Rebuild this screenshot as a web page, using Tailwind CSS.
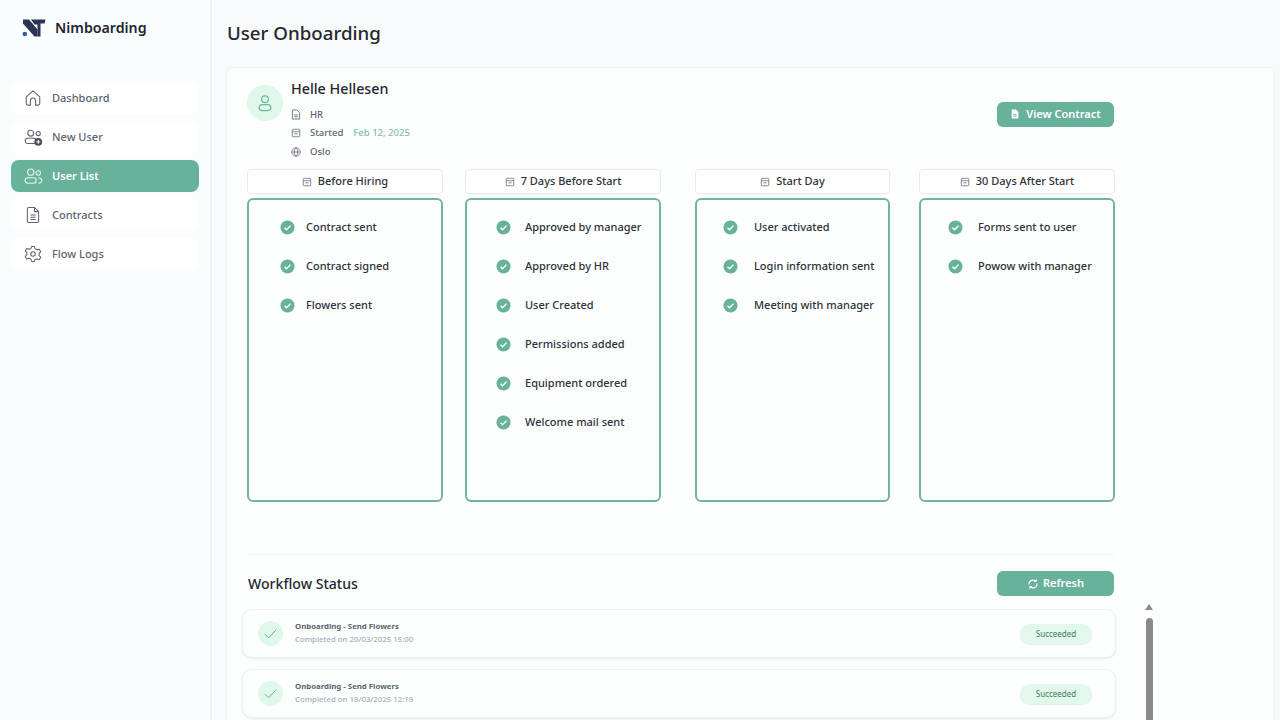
<!doctype html>
<html><head><meta charset="utf-8"><script src="https://cdn.jsdelivr.net/npm/@tailwindcss/browser@4"></script></head>
<body class="m-0 overflow-hidden">
<div class="flex h-[720px] w-[1280px] overflow-hidden bg-[#f8fafb] font-['Noto_Sans',sans-serif]">
  <aside class="w-[212px] shrink-0 border-r-2 border-[#f0f3f5] bg-[#fafdfd]">
    <div class="flex h-[54px] items-center pl-[22px] pt-px">
      <svg class="h-[18px] w-[24px]" viewBox="0 0 24 18"><path d="M1 0.500H7L15.500 10.500V17.500H12.500L1 4.500Z" fill="#2b3553"/><path d="M9 0.500H23.500L22.500 4.500H18.500V17.500H15.500V5.500H12.500Z" fill="#2b3553"/><circle cx="2.800" cy="15" r="2.300" fill="#3c55a8"/></svg>
      <span class="ml-[9px] mt-[2px] text-[14.200px] font-semibold leading-none text-[#1f2430]">Nimboarding</span>
    </div>
    <nav class="ml-[11px] mt-[28px] flex w-[188px] flex-col gap-[7px] text-[11px] font-medium text-[#5d6470]">
      <a class="flex h-[32px] items-center rounded-lg bg-white pl-[13px]">
        <svg class="h-[18px] w-[18px]" viewBox="0 0 24 24" fill="none" stroke="#5d6470" stroke-width="1.400" stroke-linejoin="round"><path d="M3 10.500 12 2.500l9 8V19a2.500 2.500 0 0 1-2.500 2.500H15.500v-6a3.500 3.500 0 0 0-7 0v6H5.500A2.500 2.500 0 0 1 3 19z"/></svg>
        <span class="ml-[10px]">Dashboard</span></a>
      <a class="flex h-[32px] items-center rounded-lg bg-white pl-[13px]">
        <svg class="h-[19px] w-[19px]" viewBox="0 0 24 24" fill="none" stroke="#5d6470" stroke-width="1.400"><circle cx="8.500" cy="6.500" r="3.700"/><rect x="1.500" y="13" width="14" height="6.500" rx="3.200"/><circle cx="18" cy="7" r="2.600"/><circle cx="18" cy="17.500" r="5" fill="#4a505c" stroke="none"/><path d="M18 15v5M15.500 17.500h5" stroke="#fff" stroke-width="1.200"/></svg>
        <span class="ml-[9px]">New User</span></a>
      <a class="flex h-[32px] items-center rounded-lg bg-[#68b29c] pl-[13px] font-semibold text-white">
        <svg class="h-[19px] w-[19px]" viewBox="0 0 24 24" fill="none" stroke="#dff8e9" stroke-width="1.400"><circle cx="8.500" cy="6.500" r="3.900"/><rect x="1.500" y="13.500" width="14" height="7" rx="3.400"/><circle cx="18" cy="7.500" r="2.800"/><path d="M18 13.500c3 0 4.500 1.500 4.500 3.300S21 20.500 18 20.500"/></svg>
        <span class="ml-[9px]">User List</span></a>
      <a class="flex h-[32px] items-center rounded-lg bg-white pl-[13px]">
        <svg class="h-[18px] w-[18px]" viewBox="0 0 24 24" fill="none" stroke="#5d6470" stroke-width="1.400" stroke-linejoin="round"><path d="M4.500 4a2 2 0 0 1 2-2h7.500l5.500 5.500V20a2 2 0 0 1-2 2h-11a2 2 0 0 1-2-2z"/><path d="M14 2v5.500h5.500M8.500 12h7M8.500 15h7M8.500 18h7"/></svg>
        <span class="ml-[10px]">Contracts</span></a>
      <a class="flex h-[32px] items-center rounded-lg bg-white pl-[13px]">
        <svg class="h-[18px] w-[18px]" viewBox="0 0 24 24" fill="none" stroke="#5d6470" stroke-width="1.400" stroke-linejoin="round"><circle cx="12" cy="12" r="3"/><path d="M10 2h4l.7 3 2.600 1.500 3-.9 2 3.400-2.200 2.100v3l2.200 2.100-2 3.400-3-.9L14.700 19l-.7 3h-4l-.7-3-2.600-1.300-3 .9-2-3.400 2.200-2.100v-3L1.700 8l2-3.400 3 .9L9.300 5z"/></svg>
        <span class="ml-[10px]">Flow Logs</span></a>
    </nav>
  </aside>
  <main class="min-w-0 flex-1 pl-[14px] pr-[5px]">
    <h1 class="flex h-[67px] items-center pl-px text-[18.700px] font-medium text-[#24272e]">User Onboarding</h1>
    <section class="h-[700px] rounded-md border border-[#eff3f3] bg-[#fbfefd] pl-[20px] pt-[9px]">
      <div class="w-[867px]">
        <div class="flex h-[92px] items-center justify-between">
          <div class="flex h-full items-start">
            <div class="mt-[8px] flex h-[36px] w-[36px] items-center justify-center rounded-full bg-[#dff8e9]">
              <svg class="h-[20px] w-[20px]" viewBox="0 0 24 24" fill="none" stroke="#74b79f" stroke-width="1.500"><circle cx="12" cy="7.500" r="4"/><rect x="5" y="14" width="14" height="7" rx="3.500"/></svg>
            </div>
            <div class="ml-[8px]">
              <div class="text-[14.300px] font-medium leading-[24px] text-[#24272e]">Helle Hellesen</div>
              <ul class="mt-[4.500px] flex flex-col text-[9.500px] font-medium leading-[18.500px] text-[#5d6470]">
                <li class="flex items-center"><svg class="mr-[9px] h-[11px] w-[10px]" viewBox="0 0 22 24" fill="none" stroke="#6b7280" stroke-width="2"><path d="M3 2h10l6 6v14H3z"/><path d="M7 13h8M7 17h8"/></svg>HR</li>
                <li class="flex items-center"><svg class="mr-[9px] h-[10px] w-[10px]" viewBox="0 0 24 24" fill="none" stroke="#6b7280" stroke-width="2"><rect x="3" y="3" width="18" height="18" rx="2"/><path d="M3 9h18M8 14h8"/></svg>Started<span class="ml-[10px] text-[#7fbfaa]">Feb 12, 2025</span></li>
                <li class="flex items-center"><svg class="mr-[9px] h-[10px] w-[10px]" viewBox="0 0 24 24" fill="none" stroke="#6b7280" stroke-width="2"><circle cx="12" cy="12" r="10"/><path d="M2 12h20M12 2c-6 6-6 14 0 20M12 2c6 6 6 14 0 20"/></svg>Oslo</li>
              </ul>
            </div>
          </div>
          <button class="mb-[18px] flex h-[25px] w-[117px] items-center justify-center rounded-md bg-[#68b29c] text-[11px] font-semibold text-white">
            <svg class="mr-[6px] h-[10px] w-[10px]" viewBox="0 0 24 24" fill="#fff"><path d="M4 1h10l6 6v16H4z"/><path d="M8 13h8M8 17h8" stroke="#68b29c" stroke-width="2"/></svg>View Contract</button>
        </div>
        <div class="flex items-start">
          <div class="w-[196px] shrink-0">
            <div class="flex h-[25px] items-center justify-center rounded-sm border border-[#e8ebec] bg-white text-[11px] font-medium text-[#2e323a]"><svg class="mr-[6px] h-[10px] w-[10px]" viewBox="0 0 24 24" fill="none" stroke="#6b7280" stroke-width="2"><rect x="3" y="3" width="18" height="18" rx="2"/><path d="M3 9h18M8 14h8"/></svg>Before Hiring</div>
            <div class="mt-[4px] flex h-[304px] flex-col gap-[19px] rounded-md border-2 border-[#74b39e] pl-[31px] pt-[17px] text-[11px] font-medium text-[#2e323a]">
              <div class="flex h-[20px] items-center"><svg class="mr-[11px] h-[15px] w-[15px] shrink-0" viewBox="0 0 16 16"><circle cx="8" cy="8" r="7.500" fill="#68b29c"/><path d="M4.800 8.200l2.200 2.200 4.200-4.400" fill="none" stroke="#fff" stroke-width="1.500"/></svg>Contract sent</div>
              <div class="flex h-[20px] items-center"><svg class="mr-[11px] h-[15px] w-[15px] shrink-0" viewBox="0 0 16 16"><circle cx="8" cy="8" r="7.500" fill="#68b29c"/><path d="M4.800 8.200l2.200 2.200 4.200-4.400" fill="none" stroke="#fff" stroke-width="1.500"/></svg>Contract signed</div>
              <div class="flex h-[20px] items-center"><svg class="mr-[11px] h-[15px] w-[15px] shrink-0" viewBox="0 0 16 16"><circle cx="8" cy="8" r="7.500" fill="#68b29c"/><path d="M4.800 8.200l2.200 2.200 4.200-4.400" fill="none" stroke="#fff" stroke-width="1.500"/></svg>Flowers sent</div>
            </div>
          </div>
          <div class="ml-[22px] w-[196px] shrink-0">
            <div class="flex h-[25px] items-center justify-center rounded-sm border border-[#e8ebec] bg-white text-[11px] font-medium text-[#2e323a]"><svg class="mr-[6px] h-[10px] w-[10px]" viewBox="0 0 24 24" fill="none" stroke="#6b7280" stroke-width="2"><rect x="3" y="3" width="18" height="18" rx="2"/><path d="M3 9h18M8 14h8"/></svg>7 Days Before Start</div>
            <div class="mt-[4px] flex h-[304px] flex-col gap-[19px] rounded-md border-2 border-[#74b39e] pl-[29px] pt-[17px] text-[11px] font-medium text-[#2e323a]">
              <div class="flex h-[20px] items-center"><svg class="mr-[14px] h-[15px] w-[15px] shrink-0" viewBox="0 0 16 16"><circle cx="8" cy="8" r="7.500" fill="#68b29c"/><path d="M4.800 8.200l2.200 2.200 4.200-4.400" fill="none" stroke="#fff" stroke-width="1.500"/></svg>Approved by manager</div>
              <div class="flex h-[20px] items-center"><svg class="mr-[14px] h-[15px] w-[15px] shrink-0" viewBox="0 0 16 16"><circle cx="8" cy="8" r="7.500" fill="#68b29c"/><path d="M4.800 8.200l2.200 2.200 4.200-4.400" fill="none" stroke="#fff" stroke-width="1.500"/></svg>Approved by HR</div>
              <div class="flex h-[20px] items-center"><svg class="mr-[14px] h-[15px] w-[15px] shrink-0" viewBox="0 0 16 16"><circle cx="8" cy="8" r="7.500" fill="#68b29c"/><path d="M4.800 8.200l2.200 2.200 4.200-4.400" fill="none" stroke="#fff" stroke-width="1.500"/></svg>User Created</div>
              <div class="flex h-[20px] items-center"><svg class="mr-[14px] h-[15px] w-[15px] shrink-0" viewBox="0 0 16 16"><circle cx="8" cy="8" r="7.500" fill="#68b29c"/><path d="M4.800 8.200l2.200 2.200 4.200-4.400" fill="none" stroke="#fff" stroke-width="1.500"/></svg>Permissions added</div>
              <div class="flex h-[20px] items-center"><svg class="mr-[14px] h-[15px] w-[15px] shrink-0" viewBox="0 0 16 16"><circle cx="8" cy="8" r="7.500" fill="#68b29c"/><path d="M4.800 8.200l2.200 2.200 4.200-4.400" fill="none" stroke="#fff" stroke-width="1.500"/></svg>Equipment ordered</div>
              <div class="flex h-[20px] items-center"><svg class="mr-[14px] h-[15px] w-[15px] shrink-0" viewBox="0 0 16 16"><circle cx="8" cy="8" r="7.500" fill="#68b29c"/><path d="M4.800 8.200l2.200 2.200 4.200-4.400" fill="none" stroke="#fff" stroke-width="1.500"/></svg>Welcome mail sent</div>
            </div>
          </div>
          <div class="ml-[34px] w-[195px] shrink-0">
            <div class="flex h-[25px] items-center justify-center rounded-sm border border-[#e8ebec] bg-white text-[11px] font-medium text-[#2e323a]"><svg class="mr-[6px] h-[10px] w-[10px]" viewBox="0 0 24 24" fill="none" stroke="#6b7280" stroke-width="2"><rect x="3" y="3" width="18" height="18" rx="2"/><path d="M3 9h18M8 14h8"/></svg>Start Day</div>
            <div class="mt-[4px] flex h-[304px] flex-col gap-[19px] rounded-md border-2 border-[#74b39e] pl-[26px] pt-[17px] text-[11px] font-medium text-[#2e323a]">
              <div class="flex h-[20px] items-center"><svg class="mr-[16px] h-[15px] w-[15px] shrink-0" viewBox="0 0 16 16"><circle cx="8" cy="8" r="7.500" fill="#68b29c"/><path d="M4.800 8.200l2.200 2.200 4.200-4.400" fill="none" stroke="#fff" stroke-width="1.500"/></svg>User activated</div>
              <div class="flex h-[20px] items-center"><svg class="mr-[16px] h-[15px] w-[15px] shrink-0" viewBox="0 0 16 16"><circle cx="8" cy="8" r="7.500" fill="#68b29c"/><path d="M4.800 8.200l2.200 2.200 4.200-4.400" fill="none" stroke="#fff" stroke-width="1.500"/></svg>Login information sent</div>
              <div class="flex h-[20px] items-center"><svg class="mr-[16px] h-[15px] w-[15px] shrink-0" viewBox="0 0 16 16"><circle cx="8" cy="8" r="7.500" fill="#68b29c"/><path d="M4.800 8.200l2.200 2.200 4.200-4.400" fill="none" stroke="#fff" stroke-width="1.500"/></svg>Meeting with manager</div>
            </div>
          </div>
          <div class="ml-[29px] w-[196px] shrink-0">
            <div class="flex h-[25px] items-center justify-center rounded-sm border border-[#e8ebec] bg-white text-[11px] font-medium text-[#2e323a]"><svg class="mr-[6px] h-[10px] w-[10px]" viewBox="0 0 24 24" fill="none" stroke="#6b7280" stroke-width="2"><rect x="3" y="3" width="18" height="18" rx="2"/><path d="M3 9h18M8 14h8"/></svg>30 Days After Start</div>
            <div class="mt-[4px] flex h-[304px] flex-col gap-[19px] rounded-md border-2 border-[#74b39e] pl-[27px] pt-[17px] text-[11px] font-medium text-[#2e323a]">
              <div class="flex h-[20px] items-center"><svg class="mr-[15px] h-[15px] w-[15px] shrink-0" viewBox="0 0 16 16"><circle cx="8" cy="8" r="7.500" fill="#68b29c"/><path d="M4.800 8.200l2.200 2.200 4.200-4.400" fill="none" stroke="#fff" stroke-width="1.500"/></svg>Forms sent to user</div>
              <div class="flex h-[20px] items-center"><svg class="mr-[15px] h-[15px] w-[15px] shrink-0" viewBox="0 0 16 16"><circle cx="8" cy="8" r="7.500" fill="#68b29c"/><path d="M4.800 8.200l2.200 2.200 4.200-4.400" fill="none" stroke="#fff" stroke-width="1.500"/></svg>Powow with manager</div>
            </div>
          </div>
        </div>
        <div class="mt-[52px] h-px bg-[#f0f3f3]"></div>
        <div class="mt-[16px] flex h-[25px] items-center justify-between">
          <h2 class="pl-px text-[14.100px] font-medium text-[#24272e]">Workflow Status</h2>
          <button class="flex h-[25px] w-[117px] items-center justify-center rounded-md bg-[#68b29c] text-[11px] font-semibold text-white">
            <svg class="mr-[4px] h-[12px] w-[12px]" viewBox="0 0 24 24" fill="none" stroke="#fff" stroke-width="2.200"><path d="M4 13a8 8 0 0 1 13.500-6.500M20 11a8 8 0 0 1-13.500 6.500"/><path d="M18.500 2.500v4.500H14M5.500 21.500V17H10" stroke-width="1.800"/></svg>Refresh</button>
        </div>
      </div>
      <div class="relative -ml-[5px] mt-[13px] flex w-[874px] flex-col gap-[11px]">
        <div class="flex h-[49px] items-center justify-between rounded-[10px] border border-[#eef1f1] bg-[#fbfefd] pl-[15px] pr-[23px] shadow-[0_1px_2px_rgba(0,0,0,0.08)]">
          <div class="flex items-center">
            <div class="flex h-[25px] w-[25px] items-center justify-center rounded-full bg-[#dff8e9]"><svg class="h-[15px] w-[15px]" viewBox="0 0 24 24" fill="none" stroke="#5fa58d" stroke-width="1.500"><path d="M3 13l6 6L21 6"/></svg></div>
            <div class="-mt-[2px] ml-[12px] flex flex-col gap-[2px]">
              <div class="text-[7.800px] font-bold leading-[11px] text-[#5d6470]">Onboarding - Send Flowers</div>
              <div class="text-[7.800px] font-medium leading-[11px] text-[#a9b0b8]">Completed on 20/03/2025 15:00</div>
            </div>
          </div>
          <span class="flex h-[20px] w-[72px] items-center justify-center rounded-full bg-[#e2f8ea] text-[8px] font-normal text-[#3f7c66] shadow-[0_1px_1px_rgba(0,0,0,0.08)]">Succeeded</span>
        </div>
        <div class="flex h-[49px] items-center justify-between rounded-[10px] border border-[#eef1f1] bg-[#fbfefd] pl-[15px] pr-[23px] shadow-[0_1px_2px_rgba(0,0,0,0.08)]">
          <div class="flex items-center">
            <div class="flex h-[25px] w-[25px] items-center justify-center rounded-full bg-[#dff8e9]"><svg class="h-[15px] w-[15px]" viewBox="0 0 24 24" fill="none" stroke="#5fa58d" stroke-width="1.500"><path d="M3 13l6 6L21 6"/></svg></div>
            <div class="-mt-[2px] ml-[12px] flex flex-col gap-[2px]">
              <div class="text-[7.800px] font-bold leading-[11px] text-[#5d6470]">Onboarding - Send Flowers</div>
              <div class="text-[7.800px] font-medium leading-[11px] text-[#a9b0b8]">Completed on 18/03/2025 12:19</div>
            </div>
          </div>
          <span class="flex h-[20px] w-[72px] items-center justify-center rounded-full bg-[#e2f8ea] text-[8px] font-normal text-[#3f7c66] shadow-[0_1px_1px_rgba(0,0,0,0.08)]">Succeeded</span>
        </div>
        <div class="absolute left-[903px] top-[-5px] flex w-[8px] flex-col items-center">
          <div class="h-0 w-0 border-x-[4px] border-b-[6px] border-x-transparent border-b-[#8a8a8a]"></div>
          <div class="mt-[8px] h-[120px] w-[7px] rounded-full bg-[#8a8a8a]"></div>
        </div>
      </div>
    </section>
  </main>
</div>
</body></html>
